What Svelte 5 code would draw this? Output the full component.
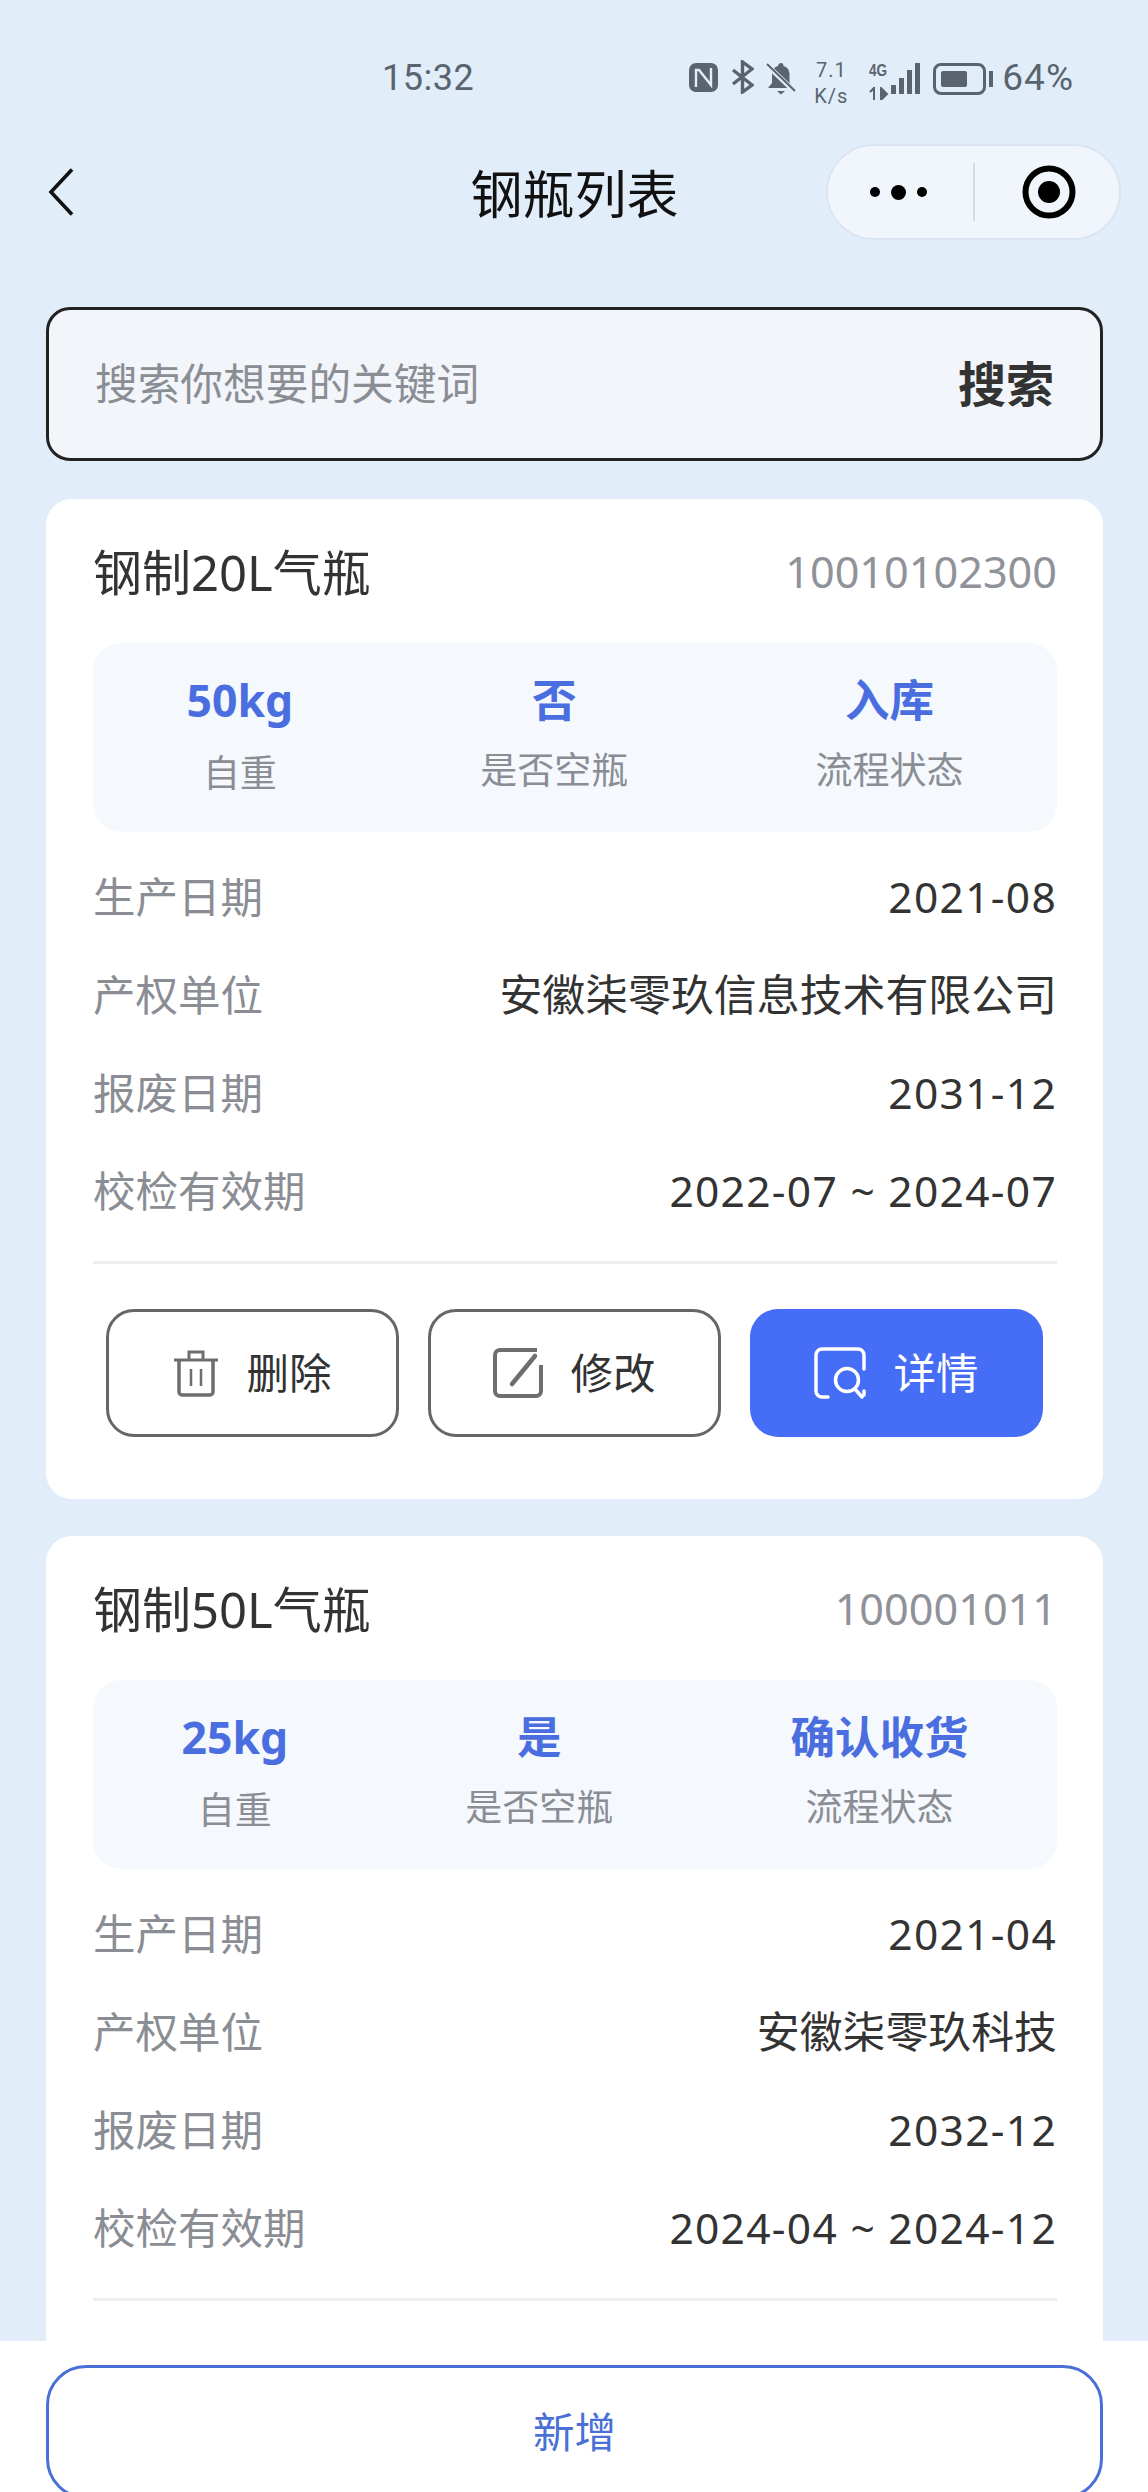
<script>
	const cylinders = [
		{
			name: '钢制20L气瓶',
			code: '10010102300',
			weight: '50kg',
			empty: '否',
			status: '入库',
			produced: '2021-08',
			owner: '安徽柒零玖信息技术有限公司',
			scrap: '2031-12',
			valid: '2022-07 ~ 2024-07',
			actions: true
		},
		{
			name: '钢制50L气瓶',
			code: '100001011',
			weight: '25kg',
			empty: '是',
			status: '确认收货',
			produced: '2021-04',
			owner: '安徽柒零玖科技',
			scrap: '2032-12',
			valid: '2024-04 ~ 2024-12',
			actions: false
		}
	];
</script>

<div class="page">
	<div class="status">
		<span class="time">15:32</span>
		<div class="status-right">
			<svg class="nfc" width="29" height="29" viewBox="0 0 29 29">
				<rect width="29" height="29" rx="7" fill="#5a646e" />
				<path d="M7 24V7h3l12 15V5" fill="none" stroke="#e2edfa" stroke-width="2.400" />
			</svg>
			<svg class="bt" width="23" height="34" viewBox="0 0 23 34">
				<path d="M2 10l19 15-9.500 7V2l9.500 7L2 24" fill="none" stroke="#5a646e" stroke-width="3.400" />
			</svg>
			<svg class="bell" width="30" height="33" viewBox="0 0 30 33">
				<path d="M15 1c2 0 2.500 1.500 2.500 3 4 1 6 4 6 9v8l4 5H2l4-5v-8c0-5 2-8 6-9 0-1.500 1-3 3-3z" fill="#5a646e" />
				<path d="M11 29h8l-4 3.500z" fill="#5a646e" />
				<path d="M1 3l28 27" stroke="#e2edfa" stroke-width="5" />
				<path d="M1 2l28 27" stroke="#5a646e" stroke-width="2" />
			</svg>
			<div class="speed"><span>7.1</span><span>K/s</span></div>
			<div class="net">
				<span class="net-label">4G</span>
				<svg width="20" height="13" viewBox="0 0 20 13" class="arrows">
					<path d="M5 0v13M1 5l4-4M12 1v12l6-6z" fill="#5a646e" stroke="#5a646e" stroke-width="2" />
				</svg>
			</div>
			<div class="bars">
				<i style="height: 9px"></i>
				<i style="height: 16px"></i>
				<i style="height: 24px"></i>
				<i style="height: 31px"></i>
			</div>
			<div class="battery"><div class="battery-fill"></div></div>
			<div class="battery-nub"></div>
			<span class="pct">64%</span>
		</div>
	</div>

	<div class="nav">
		<svg class="back" width="26" height="48" viewBox="0 0 26 48">
			<path d="M24 1.500L3 24l21 22.500" fill="none" stroke="#111" stroke-width="3.600" />
		</svg>
		<div class="title">钢瓶列表</div>
		<div class="capsule">
			<div class="dots"><i></i><i class="big"></i><i></i></div>
			<div class="capsule-line"></div>
			<svg class="target" width="54" height="54" viewBox="0 0 54 54">
				<circle cx="27" cy="27" r="23.500" fill="none" stroke="#000" stroke-width="6" />
				<circle cx="27" cy="27" r="11" fill="#000" />
			</svg>
		</div>
	</div>

	<div class="search">
		<span class="placeholder">搜索你想要的关键词</span>
		<span class="search-btn">搜索</span>
	</div>

	<div class="list">
		{#each cylinders as item}
			<div class="card">
				<div class="card-head">
					<span class="name">{item.name}</span>
					<span class="code">{item.code}</span>
				</div>
				<div class="stats">
					<div class="stat">
						<div class="stat-value">{item.weight}</div>
						<div class="stat-label">自重</div>
					</div>
					<div class="stat">
						<div class="stat-value">{item.empty}</div>
						<div class="stat-label">是否空瓶</div>
					</div>
					<div class="stat">
						<div class="stat-value">{item.status}</div>
						<div class="stat-label">流程状态</div>
					</div>
				</div>
				<div class="rows">
					<div class="row"><span>生产日期</span><b class="date">{item.produced}</b></div>
					<div class="row"><span>产权单位</span><b>{item.owner}</b></div>
					<div class="row"><span>报废日期</span><b class="date">{item.scrap}</b></div>
					<div class="row"><span>校检有效期</span><b class="date">{item.valid}</b></div>
				</div>
				{#if item.actions}
					<div class="actions">
						<div class="btn">
							<svg width="46" height="48" viewBox="0 0 46 48">
								<path d="M1 11h44M16 10V3h14v7" fill="none" stroke="#6e6e6e" stroke-width="3" />
								<path d="M6 11v32a3 3 0 0 0 3 3h28a3 3 0 0 0 3-3V11" fill="none" stroke="#6e6e6e" stroke-width="3.500" />
								<path d="M18 20v17M28 20v17" stroke="#6e6e6e" stroke-width="2.500" />
							</svg>
							<span>删除</span>
						</div>
						<div class="btn">
							<svg width="50" height="50" viewBox="0 0 50 50">
								<path d="M44 2H7a5 5 0 0 0-5 5v36a5 5 0 0 0 5 5h36a5 5 0 0 0 5-5V17" fill="none" stroke="#6e6e6e" stroke-width="4" />
								<path d="M42 8L19 36" stroke="#6e6e6e" stroke-width="4.500" stroke-linecap="round" />
							</svg>
							<span>修改</span>
						</div>
						<div class="btn primary">
							<svg width="52" height="52" viewBox="0 0 52 52">
								<path d="M14 50H8a6 6 0 0 1-6-6V8a6 6 0 0 1 6-6h36a6 6 0 0 1 6 6v14M50 44v4" fill="none" stroke="#fff" stroke-width="3.500" stroke-linecap="round" />
								<circle cx="33" cy="33" r="11.500" fill="none" stroke="#fff" stroke-width="3.500" />
								<path d="M41 42l7 8" stroke="#fff" stroke-width="3.500" stroke-linecap="round" />
							</svg>
							<span>详情</span>
						</div>
					</div>
				{/if}
			</div>
		{/each}
	</div>

	<div class="footer">
		<div class="add">新增</div>
	</div>
</div>

<style>
	:global(body) {
		background: #e2edfa;
	}
	.page {
		position: relative;
		width: 1148px;
		height: 2492px;
		overflow: hidden;
		background: #e2edfa;
		font-family: "Noto Sans", "Noto Sans CJK SC", sans-serif;
		color: #333;
	}
	.status {
		display: flex;
		height: 144px;
		padding: 57px 74px 0 382px;
		box-sizing: border-box;
		font-family: Roboto, sans-serif;
		color: #5a646e;
	}
	.time {
		font-size: 36px;
		line-height: 42px;
		letter-spacing: 0.5px;
	}
	.status-right {
		display: flex;
		align-items: flex-start;
		margin-left: auto;
	}
	.nfc {
		margin-top: 6px;
	}
	.bt {
		margin: 3px 0 0 13px;
	}
	.bell {
		margin: 5px 0 0 12px;
	}
	.speed {
		display: flex;
		flex-direction: column;
		align-items: center;
		width: 42px;
		margin-left: 14px;
		font-size: 20px;
		line-height: 26px;
		letter-spacing: 1px;
	}
	.net {
		display: flex;
		flex-direction: column;
		width: 22px;
		margin: 6px 0 0 17px;
	}
	.net-label {
		font-size: 16px;
		line-height: 16px;
		font-weight: 700;
		font-family: "Liberation Sans", sans-serif;
		transform: scaleX(0.85);
		transform-origin: left;
	}
	.arrows {
		margin-top: 8px;
	}
	.bars {
		display: flex;
		align-items: flex-end;
		gap: 3px;
		height: 31px;
		margin-top: 6px;
	}
	.bars i {
		width: 5px;
		background: #5a646e;
	}
	.battery {
		width: 53px;
		height: 32px;
		margin: 6px 0 0 13px;
		padding: 5px 16px 5px 5px;
		border: 3px solid #5a646e;
		border-radius: 8px;
		box-sizing: border-box;
	}
	.battery-fill {
		height: 100%;
		background: #5a646e;
		border-radius: 2px;
	}
	.battery-nub {
		width: 4px;
		height: 16px;
		margin: 14px 0 0 3px;
		background: #5a646e;
	}
	.pct {
		margin-left: 9px;
		font-size: 37px;
		line-height: 42px;
		letter-spacing: 1px;
	}
	.nav {
		display: grid;
		grid-template-columns: 1fr auto 1fr;
		align-items: center;
		height: 95px;
		padding: 0 27px 0 48px;
		margin-bottom: 68px;
	}
	.back {
		display: block;
	}
	.title {
		margin: 4px 0 0 -20px;
		font-size: 52px;
		line-height: 60px;
		color: #111;
	}
	.capsule {
		justify-self: end;
		display: flex;
		align-items: center;
		width: 295px;
		height: 96px;
		border: 2px solid #dbe5f1;
		border-radius: 48px;
		background: #f1f6fd;
		box-sizing: border-box;
	}
	.dots {
		display: flex;
		align-items: center;
		gap: 11px;
		margin-left: 42px;
	}
	.dots i {
		width: 10px;
		height: 10px;
		border-radius: 50%;
		background: #000;
	}
	.dots i.big {
		width: 15px;
		height: 15px;
	}
	.capsule-line {
		width: 1.500px;
		height: 58px;
		margin-left: 46px;
		background: #d3dbe5;
	}
	.target {
		margin-left: 47px;
	}
	.search {
		display: flex;
		align-items: center;
		justify-content: space-between;
		height: 154px;
		margin: 0 45px 38px 46px;
		padding: 0 46px;
		border: 3px solid #222;
		border-radius: 24px;
		background: #f2f5fa;
		box-sizing: border-box;
	}
	.placeholder {
		font-size: 42.700px;
		line-height: 60px;
		color: #8a8e94;
	}
	.search-btn {
		font-size: 48px;
		line-height: 60px;
		font-weight: 700;
		color: #333;
	}
	.list {
		display: flex;
		flex-direction: column;
		gap: 37px;
		margin: 0 45px 0 46px;
	}
	.card {
		padding: 47px 46px 62px 47px;
		border-radius: 26px;
		background: #fff;
	}
	.card-head {
		display: flex;
		align-items: center;
		justify-content: space-between;
		height: 52px;
		margin-bottom: 45px;
	}
	.name {
		font-size: 49px;
		line-height: 52px;
		color: #333;
	}
	.code {
		font-size: 43.200px;
		line-height: 52px;
		color: #8f9298;
	}
	.stats {
		display: flex;
		justify-content: space-around;
		height: 189px;
		padding-top: 32px;
		border-radius: 28px;
		background: #f5f9fe;
		box-sizing: border-box;
	}
	.stat {
		text-align: center;
	}
	.stat:first-child .stat-label {
		margin-top: 23px;
	}
	.stat-value {
		font-size: 44.500px;
		line-height: 50px;
		font-weight: 700;
		color: #4a6de0;
	}
	.stat-label {
		margin-top: 20px;
		font-size: 37px;
		line-height: 50px;
		color: #8a8e94;
	}
	.rows {
		display: flex;
		flex-direction: column;
		gap: 48px;
		margin-top: 40px;
		padding-bottom: 45px;
		border-bottom: 3px solid #eee;
	}
	.row {
		display: flex;
		align-items: center;
		justify-content: space-between;
		height: 50px;
		font-size: 42.500px;
		line-height: 50px;
		color: #8a8e94;
	}
	.row b {
		font-size: 42.900px;
		font-weight: 400;
		color: #333;
	}
	.row b.date {
		font-size: 42.500px;
		letter-spacing: 1.300px;
	}
	.actions {
		display: flex;
		justify-content: space-between;
		margin: 45px 14px 0 13px;
	}
	.btn {
		display: flex;
		align-items: center;
		justify-content: center;
		gap: 27px;
		width: 293px;
		height: 128px;
		border: 3px solid #666;
		border-radius: 28px;
		box-sizing: border-box;
		font-size: 42.500px;
		line-height: 50px;
		color: #333;
	}
	.btn.primary {
		border: 0;
		background: #466df6;
		color: #fff;
	}
	.footer {
		position: absolute;
		left: 0;
		right: 0;
		bottom: 0;
		height: 151px;
		padding: 24px 45px 0 46px;
		background: #fff;
		box-sizing: border-box;
	}
	.add {
		display: flex;
		align-items: center;
		justify-content: center;
		height: 134px;
		border: 3px solid #4a6fd6;
		border-radius: 40px;
		box-sizing: border-box;
		font-size: 41.500px;
		line-height: 50px;
		color: #4a6fd6;
	}
</style>
